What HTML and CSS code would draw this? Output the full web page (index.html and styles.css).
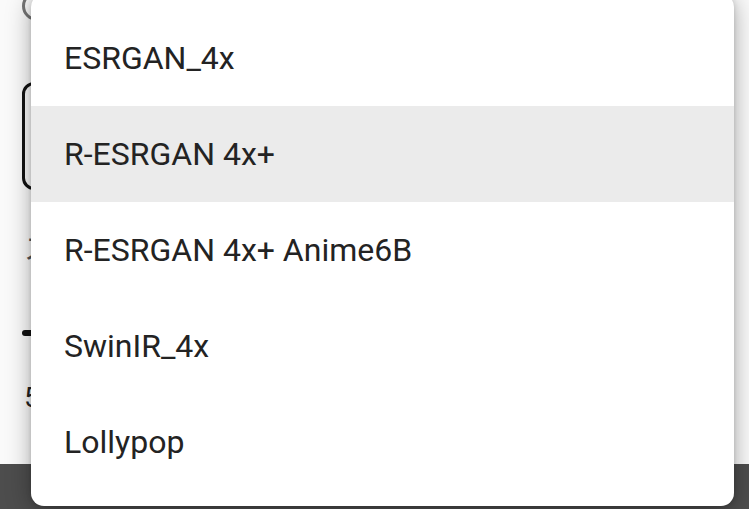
FILE: index.html
```html
<!DOCTYPE html>
<html lang="ja">
<head>
<meta charset="utf-8">
<title>Upscaler menu</title>
<link rel="stylesheet" href="styles.css">
</head>
<body>
<div class="page">
  <div class="content">
    <div class="radio"></div>
    <div class="field"></div>
    <div class="label">ス</div>
    <div class="slider"></div>
    <div class="value">5</div>
  </div>
  <div class="navbar"></div>
</div>
<ul class="menu">
  <li class="item">ESRGAN_4x</li>
  <li class="item selected">R-ESRGAN 4x+</li>
  <li class="item">R-ESRGAN 4x+ Anime6B</li>
  <li class="item">SwinIR_4x</li>
  <li class="item">Lollypop</li>
</ul>
</body>
</html>
```
FILE: styles.css
```css
html, body {
  margin: 0;
  padding: 0;
  width: 749px;
  height: 509px;
  overflow: hidden;
  background: #fafafa;
  font-family: Roboto, "Noto Sans CJK JP", sans-serif;
}
.page {
  display: flex;
  flex-direction: column;
  height: 509px;
}
.content {
  flex: 1;
  padding-left: 22px;
  display: flex;
  flex-direction: column;
  align-items: flex-start;
}
.radio {
  width: 30px;
  height: 30px;
  margin-top: -9px;
  border: 3px solid #757575;
  border-radius: 50%;
  box-sizing: border-box;
}
.field {
  margin-top: 61px;
  width: 700px;
  height: 108px;
  border: 3px solid #111;
  border-radius: 12px;
  box-sizing: border-box;
}
.label {
  margin-top: 42px;
  font-size: 28px;
  line-height: 36px;
  color: #555;
  padding-left: 2px;
}
.slider {
  margin-top: 62px;
  width: 200px;
  height: 6px;
  border-radius: 3px;
  background: #111;
}
.value {
  margin-top: 45px;
  font-size: 28px;
  line-height: 34px;
  color: #222;
  padding-left: 2px;
}
.navbar {
  height: 45px;
  background: #4d4d4d;
}
.menu {
  position: absolute;
  left: 31px;
  top: -6px;
  width: 703px;
  margin: 0;
  padding: 16px 0 16px;
  list-style: none;
  background: #fff;
  border-radius: 13px;
  box-shadow: 0 4px 24px rgba(0, 0, 0, 0.34), 0 1px 5px rgba(0, 0, 0, 0.14);
}
.item {
  height: 96px;
  display: flex;
  align-items: center;
  padding-left: 33px;
  font-size: 32px;
  color: #232323;
}
.selected {
  background: #ebebeb;
}
```
